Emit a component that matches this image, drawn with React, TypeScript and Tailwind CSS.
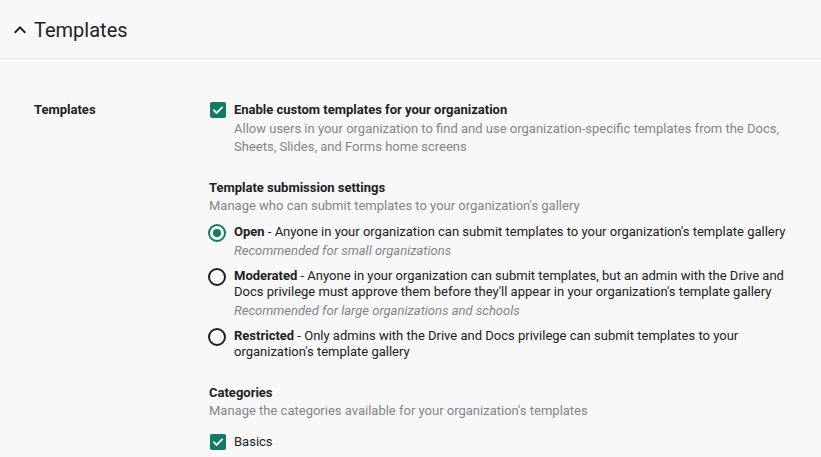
import React from "react";

function Checkbox() {
  return (
    <span className="mt-[2px] flex h-4 w-4 shrink-0 items-center justify-center rounded-[2px] bg-[#137b63]">
      <svg viewBox="0 0 24 24" className="h-[14px] w-[14px]" fill="none" stroke="#fff" strokeWidth="3" strokeLinecap="square">
        <path d="M5 12.5l4.5 4.5L19 7.5" />
      </svg>
    </span>
  );
}

function Radio({ on }: { on?: boolean }) {
  return (
    <span
      className={
        "-ml-[2px] flex h-[18px] w-[18px] shrink-0 items-center justify-center rounded-full border-2 " +
        (on ? "border-[#137b63]" : "border-[#202124]")
      }
    >
      {on && <span className="h-2 w-2 rounded-full bg-[#137b63]" />}
    </span>
  );
}

function RadioRow({
  on,
  name,
  text,
  sub,
}: {
  on?: boolean;
  name: string;
  text: string;
  sub?: string;
}) {
  return (
    <div className="flex gap-2">
      <div>
        <Radio on={on} />
      </div>
      <div className="w-[565px]">
        <p className="text-[13px] leading-[16px] text-[#202124]">
          <b className="font-bold">{name}</b>
          {" - " + text}
        </p>
        {sub && (
          <p className="mt-[3px] text-[13px] italic leading-[16px] text-[#80868b]">{sub}</p>
        )}
      </div>
    </div>
  );
}

export default function App() {
  return (
    <div
      className="min-h-[457px] w-full bg-[#f8f8f8] text-[#202124]"
      style={{ fontFamily: "Roboto, 'Noto Sans', Arial, sans-serif" }}
    >
      <div className="flex h-[59px] items-center border-b border-[#e3e3e3] pl-2">
        <svg viewBox="0 0 24 24" className="mt-[2px] h-6 w-6" fill="#202124">
          <path d="M7.41 15.41L12 10.83l4.59 4.58L18 14l-6-6-6 6z" />
        </svg>
        <h1 className="ml-[2px] mt-[2px] text-[20px] leading-[24px] text-[#202124]">Templates</h1>
      </div>

      <div className="flex pl-[34px] pt-[41px]">
        <div className="w-[176px] shrink-0 text-[13px] font-bold leading-[20px]">Templates</div>
        <div className="flex flex-col">
          <div className="flex gap-2">
            <Checkbox />
            <div className="w-[565px]">
              <div className="text-[13px] font-bold leading-[20px]">
                Enable custom templates for your organization
              </div>
              <div className="text-[13px] leading-[18px] text-[#80868b]">
                Allow users in your organization to find and use organization-specific templates from the Docs,
                Sheets, Slides, and Forms home screens
              </div>
            </div>
          </div>

          <div className="-ml-px mt-[22px]">
            <div className="text-[13px] font-bold leading-[20px]">Template submission settings</div>
            <div className="text-[13px] leading-[16px] text-[#80868b]">
              Manage who can submit templates to your organization's gallery
            </div>
          </div>

          <div className="mt-[10px] flex flex-col gap-[9px]">
            <RadioRow
              on
              name="Open"
              text="Anyone in your organization can submit templates to your organization's template gallery"
              sub="Recommended for small organizations"
            />
            <RadioRow
              name="Moderated"
              text="Anyone in your organization can submit templates, but an admin with the Drive and Docs privilege must approve them before they'll appear in your organization's template gallery"
              sub="Recommended for large organizations and schools"
            />
            <RadioRow
              name="Restricted"
              text="Only admins with the Drive and Docs privilege can submit templates to your organization's template gallery"
            />
          </div>

          <div className="-ml-px mt-[23px]">
            <div className="text-[13px] font-bold leading-[20px]">Categories</div>
            <div className="text-[13px] leading-[16px] text-[#80868b]">
              Manage the categories available for your organization's templates
            </div>
          </div>

          <div className="mt-[13px] flex gap-2">
            <Checkbox />
            <div className="text-[13px] leading-[20px]">Basics</div>
          </div>
        </div>
      </div>
    </div>
  );
}
